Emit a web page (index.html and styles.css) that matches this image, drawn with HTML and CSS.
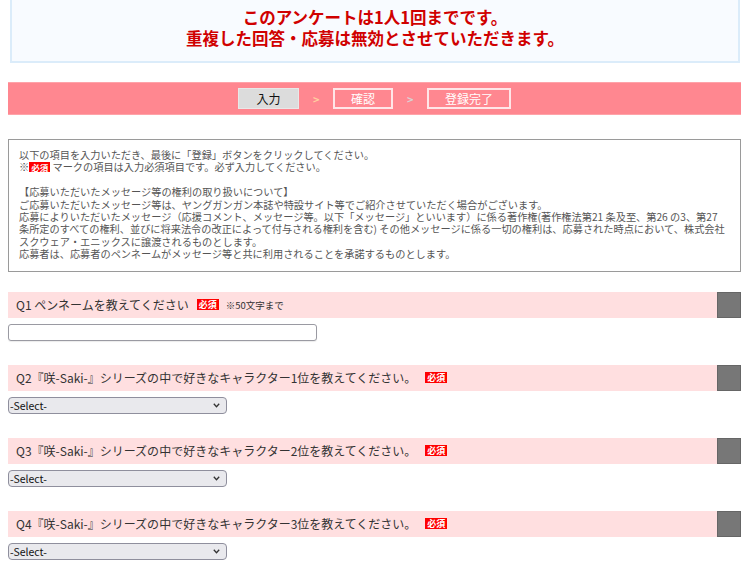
FILE: index.html
```html
<!DOCTYPE html>
<html lang="ja">
<head>
<meta charset="utf-8">
<title>アンケート</title>
<link rel="stylesheet" href="styles.css">
</head>
<body>
<div class="page">
  <div class="notice">
    <p>このアンケートは1人1回までです。</p>
    <p>重複した回答・応募は無効とさせていただきます。</p>
  </div>

  <div class="steps">
    <span class="step current">入力</span>
    <span class="arrow on">&gt;</span>
    <span class="step">確認</span>
    <span class="arrow">&gt;</span>
    <span class="step wide">登録完了</span>
  </div>

  <div class="info">
    <p>以下の項目を入力いただき、最後に「登録」ボタンをクリックしてください。</p>
    <p>※<span class="req small">必須</span> マークの項目は入力必須項目です。必ず入力してください。</p>
    <p>&nbsp;</p>
    <p>【応募いただいたメッセージ等の権利の取り扱いについて】</p>
    <p>ご応募いただいたメッセージ等は、ヤングガンガン本誌や特設サイト等でご紹介させていただく場合がございます。</p>
    <p>応募によりいただいたメッセージ（応援コメント、メッセージ等。以下「メッセージ」といいます）に係る著作権(著作権法第21 条及至、第26 の3、第27</p>
    <p>条所定のすべての権利、並びに将来法令の改正によって付与される権利を含む) その他メッセージに係る一切の権利は、応募された時点において、株式会社</p>
    <p>スクウェア・エニックスに譲渡されるものとします。</p>
    <p>応募者は、応募者のペンネームがメッセージ等と共に利用されることを承諾するものとします。</p>
  </div>

  <div class="question">
    <div class="qhead">
      <div class="qtitle">Q1 ペンネームを教えてください<span class="req q1">必須</span><span class="note">※50文字まで</span></div>
      <div class="qbox"></div>
    </div>
    <input class="text" type="text">
  </div>

  <div class="question">
    <div class="qhead">
      <div class="qtitle">Q2『咲-Saki-』シリーズの中で好きなキャラクター1位を教えてください。<span class="req gap">必須</span></div>
      <div class="qbox"></div>
    </div>
    <div class="selwrap">
      <select class="sel"><option>-Select-</option></select>
      <svg class="chev" width="7" height="5" viewBox="0 0 7 5"><path d="M0.8 0.8 L3.5 3.8 L6.2 0.8" fill="none" stroke="#333" stroke-width="1.3"/></svg>
    </div>
  </div>

  <div class="question">
    <div class="qhead">
      <div class="qtitle">Q3『咲-Saki-』シリーズの中で好きなキャラクター2位を教えてください。<span class="req gap">必須</span></div>
      <div class="qbox"></div>
    </div>
    <div class="selwrap">
      <select class="sel"><option>-Select-</option></select>
      <svg class="chev" width="7" height="5" viewBox="0 0 7 5"><path d="M0.8 0.8 L3.5 3.8 L6.2 0.8" fill="none" stroke="#333" stroke-width="1.3"/></svg>
    </div>
  </div>

  <div class="question">
    <div class="qhead">
      <div class="qtitle">Q4『咲-Saki-』シリーズの中で好きなキャラクター3位を教えてください。<span class="req gap">必須</span></div>
      <div class="qbox"></div>
    </div>
    <div class="selwrap">
      <select class="sel"><option>-Select-</option></select>
      <svg class="chev" width="7" height="5" viewBox="0 0 7 5"><path d="M0.8 0.8 L3.5 3.8 L6.2 0.8" fill="none" stroke="#333" stroke-width="1.3"/></svg>
    </div>
  </div>
</div>
</body>
</html>
```

FILE: styles.css
```css
html, body {
  margin: 0;
  padding: 0;
  background: #fff;
  font-family: "Noto Sans CJK JP", "Noto Sans", sans-serif;
  overflow: hidden;
}

.page {
  padding: 0 9px 0 8px;
}

.notice {
  margin: -14px 1px 0 2px;
  padding: 19px 0 12px;
  border: 2px solid #dbecfa;
  background: #f8fbff;
  text-align: center;
  color: #d00000;
  font-weight: bold;
  font-size: 16.5px;
  line-height: 21px;
}

.notice p {
  margin: 0;
  height: 21px;
  overflow: visible;
}

.steps {
  margin-top: 19px;
  background: #ff8790;
  display: flex;
  justify-content: center;
  align-items: center;
  gap: 14px;
  border-top: 1px solid #ffa3a9;
  border-bottom: 1px solid #ffa3a9;
  height: 21px;
  box-sizing: content-box;
  padding: 5px 0;
}

.step {
  box-sizing: border-box;
  height: 21px;
  width: 60px;
  display: flex;
  align-items: center;
  justify-content: center;
  font-size: 12px;
  color: #fff;
  border: 2px solid #ffe6e8;
}

.step.current {
  width: 61px;
  background: #dcdcdc;
  color: #111;
  border: 1px solid #e8e8e8;
}

.step.wide {
  width: 84px;
}

.arrow {
  width: 6px;
  font-size: 11px;
  font-weight: bold;
  color: #d9d2d4;
  text-align: center;
}

.arrow.on {
  color: #ffcfa0;
}

.info {
  margin-top: 24px;
  border: 1px solid #9a9a9a;
  padding: 9px 10px 10px;
  font-size: 10.2px;
  color: #555;
  white-space: nowrap;
}

.info p {
  margin: 0;
  height: 12.4px;
  line-height: 12.4px;
}

.req {
  display: inline-block;
  background: #f00;
  color: #fff;
  font-weight: bold;
  font-size: 9px;
  line-height: 11px;
  padding: 0 2px;
  vertical-align: 1px;
}

.req.small {
  font-size: 8.5px;
  line-height: 10px;
  vertical-align: 0;
}

.req.q1 {
  margin-left: 8px;
}

.req.gap {
  margin-left: 9px;
}

.note {
  font-size: 9.5px;
  color: #333;
  margin-left: 7px;
}

.question {
  margin-top: 20px;
  display: flex;
  flex-direction: column;
  align-items: flex-start;
}

.question + .question {
  margin-top: 24px;
}

.qhead {
  width: 100%;
  height: 26px;
  display: flex;
  align-items: stretch;
}

.qtitle {
  flex: 1;
  background: #ffdfe0;
  padding-left: 8px;
  display: flex;
  align-items: center;
  font-size: 12px;
  color: #333;
  white-space: pre;
}

.qbox {
  width: 24px;
  box-sizing: border-box;
  background: #777;
  border: 1px solid #666;
}

.text {
  display: block;
  margin: 6px 0 0;
  box-sizing: border-box;
  width: 309px;
  height: 17px;
  border: 1px solid #9a9aa2;
  border-radius: 3px;
  background: #fff;
  padding: 0 3px;
  box-shadow: 0 1px 1px rgba(0,0,0,0.08);
}

.selwrap {
  margin-top: 6px;
  position: relative;
  width: 219px;
  height: 17px;
}

.sel {
  display: block;
  -webkit-appearance: none;
  appearance: none;
  box-sizing: border-box;
  width: 219px;
  height: 17px;
  margin: 0;
  border: 1px solid #8f8f9d;
  border-radius: 4px;
  background: #e9e9ed;
  font-family: "Noto Sans CJK JP", "Noto Sans", sans-serif;
  font-size: 10.5px;
  line-height: 15px;
  color: #111;
  padding: 0 0 0 1px;
}

.chev {
  position: absolute;
  right: 7px;
  top: 6px;
  pointer-events: none;
}
```
